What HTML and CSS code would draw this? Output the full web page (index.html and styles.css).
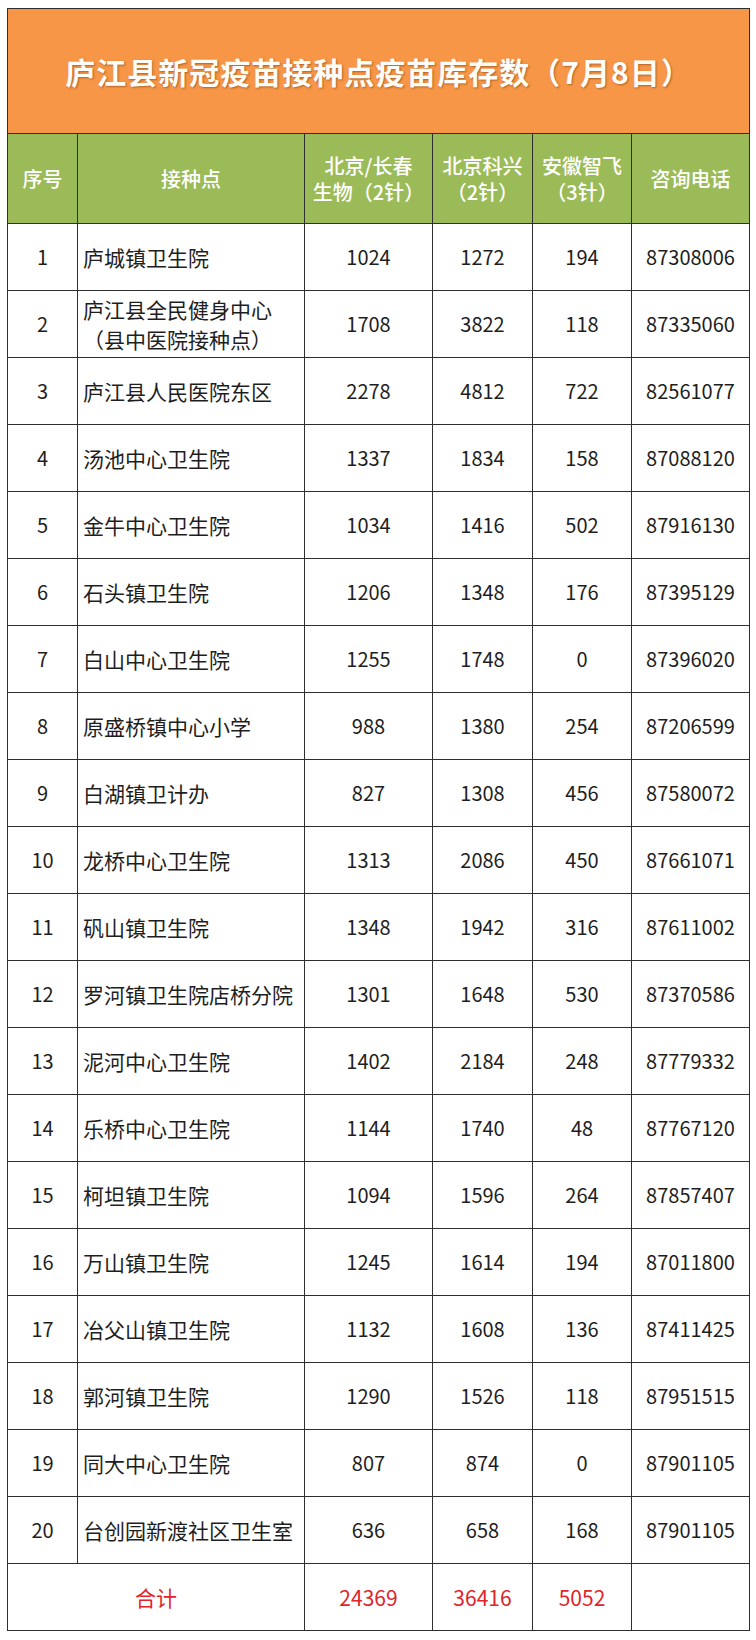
FILE: index.html
```html
<!DOCTYPE html>
<html lang="zh-CN">
<head>
<meta charset="utf-8">
<title>庐江县新冠疫苗接种点疫苗库存数</title>
<link rel="stylesheet" href="styles.css">
</head>
<body>
<table class="stock">
  <colgroup>
    <col class="c-no"><col class="c-site"><col class="c-bj"><col class="c-kx"><col class="c-zf"><col class="c-tel">
  </colgroup>
  <thead>
    <tr class="title-row"><th colspan="6" class="title">庐江县新冠疫苗接种点疫苗库存数（7月8日）</th></tr>
    <tr class="head-row">
      <th>序号</th>
      <th>接种点</th>
      <th>北京/长春<br>生物（2针）</th>
      <th>北京科兴<br>（2针）</th>
      <th>安徽智飞<br>（3针）</th>
      <th>咨询电话</th>
    </tr>
  </thead>
  <tbody>
    <tr><td>1</td><td class="site">庐城镇卫生院</td><td>1024</td><td>1272</td><td>194</td><td>87308006</td></tr>
    <tr><td>2</td><td class="site">庐江县全民健身中心<br>（县中医院接种点）</td><td>1708</td><td>3822</td><td>118</td><td>87335060</td></tr>
    <tr><td>3</td><td class="site">庐江县人民医院东区</td><td>2278</td><td>4812</td><td>722</td><td>82561077</td></tr>
    <tr><td>4</td><td class="site">汤池中心卫生院</td><td>1337</td><td>1834</td><td>158</td><td>87088120</td></tr>
    <tr><td>5</td><td class="site">金牛中心卫生院</td><td>1034</td><td>1416</td><td>502</td><td>87916130</td></tr>
    <tr><td>6</td><td class="site">石头镇卫生院</td><td>1206</td><td>1348</td><td>176</td><td>87395129</td></tr>
    <tr><td>7</td><td class="site">白山中心卫生院</td><td>1255</td><td>1748</td><td>0</td><td>87396020</td></tr>
    <tr><td>8</td><td class="site">原盛桥镇中心小学</td><td>988</td><td>1380</td><td>254</td><td>87206599</td></tr>
    <tr><td>9</td><td class="site">白湖镇卫计办</td><td>827</td><td>1308</td><td>456</td><td>87580072</td></tr>
    <tr><td>10</td><td class="site">龙桥中心卫生院</td><td>1313</td><td>2086</td><td>450</td><td>87661071</td></tr>
    <tr><td>11</td><td class="site">矾山镇卫生院</td><td>1348</td><td>1942</td><td>316</td><td>87611002</td></tr>
    <tr><td>12</td><td class="site">罗河镇卫生院店桥分院</td><td>1301</td><td>1648</td><td>530</td><td>87370586</td></tr>
    <tr><td>13</td><td class="site">泥河中心卫生院</td><td>1402</td><td>2184</td><td>248</td><td>87779332</td></tr>
    <tr><td>14</td><td class="site">乐桥中心卫生院</td><td>1144</td><td>1740</td><td>48</td><td>87767120</td></tr>
    <tr><td>15</td><td class="site">柯坦镇卫生院</td><td>1094</td><td>1596</td><td>264</td><td>87857407</td></tr>
    <tr><td>16</td><td class="site">万山镇卫生院</td><td>1245</td><td>1614</td><td>194</td><td>87011800</td></tr>
    <tr><td>17</td><td class="site">冶父山镇卫生院</td><td>1132</td><td>1608</td><td>136</td><td>87411425</td></tr>
    <tr><td>18</td><td class="site">郭河镇卫生院</td><td>1290</td><td>1526</td><td>118</td><td>87951515</td></tr>
    <tr><td>19</td><td class="site">同大中心卫生院</td><td>807</td><td>874</td><td>0</td><td>87901105</td></tr>
    <tr><td>20</td><td class="site">台创园新渡社区卫生室</td><td>636</td><td>658</td><td>168</td><td>87901105</td></tr>
  </tbody>
  <tfoot>
    <tr class="total-row"><td colspan="2" class="total-label">合计</td><td>24369</td><td>36416</td><td>5052</td><td></td></tr>
  </tfoot>
</table>
</body>
</html>
```

FILE: styles.css
```css
html, body {
  margin: 0;
  padding: 0;
  background: #ffffff;
}

body {
  padding: 8px 0 0 7px;
  font-family: "Noto Sans CJK SC", "Noto Sans", sans-serif;
  color: #1e1e1e;
}

.stock {
  border-collapse: collapse;
  table-layout: fixed;
  width: 742px;
}

.c-no { width: 70px; }
.c-site { width: 227px; }
.c-bj { width: 128px; }
.c-kx { width: 100px; }
.c-zf { width: 99px; }
.c-tel { width: 118px; }

.stock th,
.stock td {
  border: 1px solid #2e2e2e;
  padding: 0;
  text-align: center;
  vertical-align: middle;
}

.title-row { height: 125px; }

.title {
  background: #f79646;
  color: #fffdf8;
  font-family: "Noto Sans CJK SC", sans-serif;
  font-weight: 700;
  font-size: 30px;
  letter-spacing: 1px;
  text-shadow: 1px 1px 2px rgba(90, 40, 0, 0.45);
  padding-top: 4px;
}

.head-row { height: 90px; }

.head-row th {
  background: #9bbb59;
  color: #ffffff;
  font-weight: 500;
  font-size: 20px;
  line-height: 26px;
}

.stock tbody tr { height: 67px; }

.stock tbody td {
  font-size: 20px;
  line-height: 26px;
}

.stock tbody td.site {
  text-align: left;
  padding-left: 5px;
  font-size: 21px;
  line-height: 30px;
}

.total-row { height: 67px; }

.total-row td {
  color: #e0242a;
  font-size: 21px;
}
```
